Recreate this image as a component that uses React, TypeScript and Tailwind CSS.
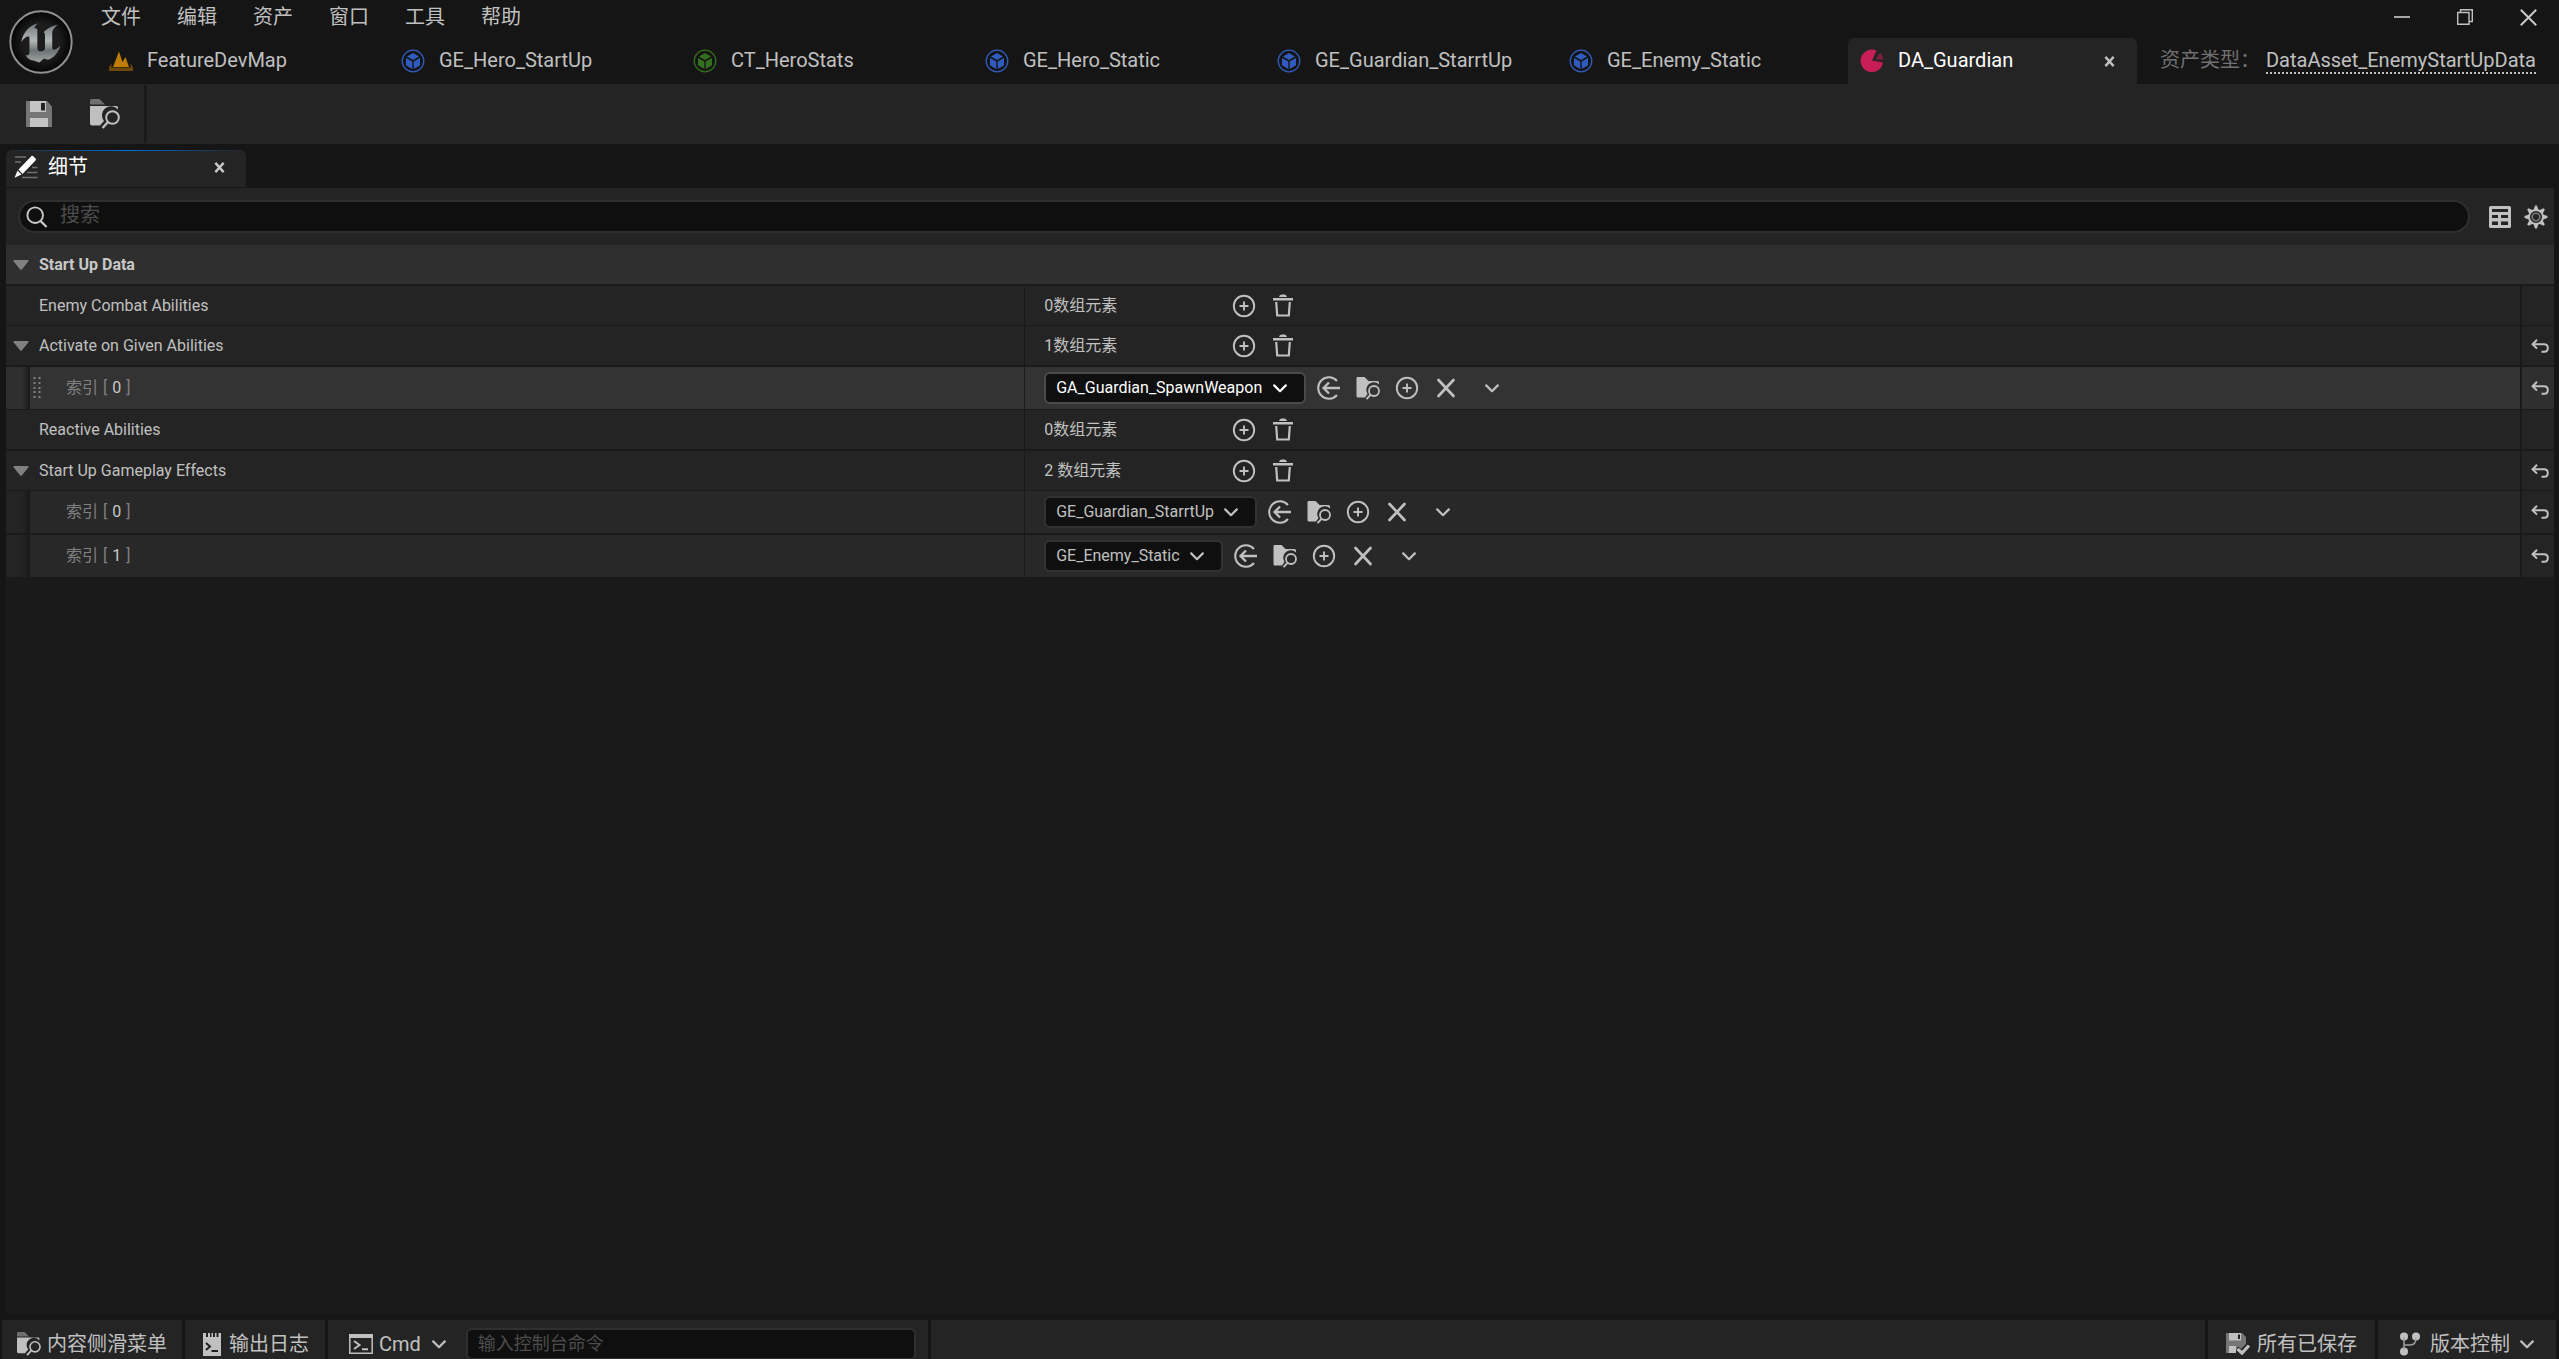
import React from "react";

const FONT = "font-['Roboto','Noto_Sans_CJK_SC',sans-serif]";

type IconProps = { className?: string };

function Logo() {
  return (
    <svg viewBox="0 0 194 194" className="size-16" aria-hidden="true">
      <defs>
        <linearGradient id="metal" x1="0" y1="0" x2="0" y2="1">
          <stop offset="0" stopColor="#70767a" />
          <stop offset="0.45" stopColor="#b4b7b8" />
          <stop offset="0.7" stopColor="#6c7373" />
          <stop offset="1" stopColor="#a3a7a8" />
        </linearGradient>
        <radialGradient id="disc">
          <stop offset="0.6" stopColor="#1c1c1c" />
          <stop offset="1" stopColor="#040404" />
        </radialGradient>
      </defs>
      <circle cx="97" cy="97" r="93" fill="url(#disc)" stroke="#8d9192" strokeWidth="6" />
      <path
        fill="url(#metal)"
        d="M90 40C68 44 43 62 37 98C45 84 56 78 61 81C62 82 62 84 62 88V126C62 136 58 140 50 136C56 149 68 154 77 154L92 159L106 147L117 151C134 146 150 130 155 108C147 118 138 122 134 120C131 119 131 116 131 112V70C131 60 140 51 148 45C130 48 113 58 105 68C107 68 109 70 109 75V118C106 124 97 127 91 124C87 122 86 120 86 114V62C86 55 80 55 76 56C79 48 84 43 90 40Z"
      />
    </svg>
  );
}

function MapIcon() {
  return (
    <svg viewBox="0 0 24 20" className="w-6 h-5" aria-hidden="true">
      <path fill="#c07c09" d="M4 16L10 0.500L13.500 11L16.500 6L20 16Z" />
      <path fill="#6e480b" d="M3 12L2 16.500H22L21 12L24 16V20H0V16Z" />
    </svg>
  );
}

function CubeIcon({ className = "" }: IconProps) {
  return (
    <svg viewBox="0 0 24 24" className={`size-6 ${className}`} fill="currentColor" aria-hidden="true">
      <circle cx="12" cy="12" r="10.800" fill="none" stroke="currentColor" strokeWidth="1.300" />
      <path d="M12 4L18 7.500L12 11L6 7.500Z" />
      <path d="M5 9L11.300 12.600V20L5 16.300Z" />
      <path d="M19 9L12.700 12.600V20L19 16.300Z" />
    </svg>
  );
}

function PieIcon() {
  return (
    <svg viewBox="0 0 24 24" className="size-6" aria-hidden="true">
      <path fill="#c81e58" d="M16.500 1.500A11.300 11.300 0 1 0 23 13.500L12 11.500Z" />
      <path fill="#7a1f40" d="M20 3.500A11 11 0 0 1 23.500 10.800L15.500 10.500Z" />
    </svg>
  );
}

function CloseIcon({ className = "" }: IconProps) {
  return (
    <svg viewBox="0 0 12 12" className={className} fill="none" stroke="currentColor" strokeWidth="2.600" aria-hidden="true">
      <path d="M1.500 1L10.500 11M10.500 1L1.500 11" />
    </svg>
  );
}

function SaveIcon() {
  return (
    <svg viewBox="0 0 26 26" className="size-[26px]" aria-hidden="true">
      <path fill="#767676" d="M0 0H21L26 5.500V26H0Z" />
      <path fill="#c4c4c4" d="M4 0H20V11H4ZM4 17H22V26H4Z" />
      <path fill="#242424" d="M15 2H19V9.500H15Z" />
    </svg>
  );
}

function BrowseTwoTone({ className = "" }: IconProps) {
  return (
    <svg viewBox="0 0 30 30" className={className} aria-hidden="true">
      <path fill="#6f6f6f" d="M0 1.500Q0 0 1.500 0H9.500L15 5.500H0Z" />
      <path fill="#c0c0c0" d="M0 7H26.500Q28 7 28 8.500V10.500A9 9 0 0 0 14 22L10 26.500H2Q0 26.500 0 24.500Z" />
      <circle cx="22.500" cy="18.500" r="6.300" fill="none" stroke="#c0c0c0" strokeWidth="2" />
      <path stroke="#c0c0c0" strokeWidth="2.400" d="M18 23L12.500 29" />
    </svg>
  );
}

function BrowseIcon() {
  return (
    <svg viewBox="0 0 24 24" className="size-6" aria-hidden="true">
      <path fill="currentColor" d="M0.500 2Q0.500 1 1.500 1H8.500L12.500 5H21.500Q23 5 23 6.500V8.500A7.500 7.500 0 0 0 11.500 18L9 21.500H2Q0.500 21.500 0.500 20Z" />
      <circle cx="18" cy="15" r="5" fill="none" stroke="currentColor" strokeWidth="1.800" />
      <path stroke="currentColor" strokeWidth="2" d="M14.500 18.800L10.500 23.200" />
    </svg>
  );
}

function DetailsIcon() {
  return (
    <svg viewBox="0 0 24 24" className="size-6" aria-hidden="true">
      <path stroke="#6f6f6f" strokeWidth="1.600" d="M1 2H12M1 7H7M18 12.500H23.500M13 17.500H23.500M8 22.500H23.500" />
      <path fill="#fff" d="M4.500 14.500L17.500 1Q18.500 0.500 19.500 1.500L21.500 3.500Q22.500 4.500 21.500 5.500L8.500 19ZM3.500 15.500L7.500 19.500L0.500 22.800Z" />
    </svg>
  );
}

function SearchIcon() {
  return (
    <svg viewBox="0 0 24 24" className="size-[22px]" fill="none" stroke="#c8c8c8" strokeWidth="2" aria-hidden="true">
      <circle cx="10" cy="10" r="8.500" />
      <path d="M16 16.500L22.500 23" strokeWidth="2.400" />
    </svg>
  );
}

function TableIcon() {
  return (
    <svg viewBox="0 0 22 22" className="size-[22px]" aria-hidden="true">
      <path
        fill="#c0c0c0"
        fillRule="evenodd"
        d="M1.500 0H20.500Q22 0 22 1.500V20.500Q22 22 20.500 22H1.500Q0 22 0 20.500V1.500Q0 0 1.500 0ZM3 3V6H19V3ZM3 9V12H9V9ZM12 9V12H19V9ZM3 15.500V19H9V15.500ZM12 15.500V19H19V15.500Z"
      />
    </svg>
  );
}

const TEETH = [0, 45, 90, 135, 180, 225, 270, 315];

function GearIcon() {
  return (
    <svg viewBox="-12 -12 24 24" className="size-6" aria-hidden="true">
      {TEETH.map((angle) => (
        <path key={angle} fill="#c0c0c0" transform={`rotate(${angle})`} d="M-2.400 -7L-1 -11.500H1L2.400 -7Z" />
      ))}
      <circle r="7" fill="none" stroke="#c0c0c0" strokeWidth="1.900" />
      <circle r="3.800" fill="none" stroke="#7c7c7c" strokeWidth="1.600" />
    </svg>
  );
}

function PlusCircle() {
  return (
    <svg viewBox="0 0 24 24" className="size-6" fill="none" stroke="currentColor" strokeWidth="1.900" aria-hidden="true">
      <circle cx="12" cy="12" r="10.200" />
      <path d="M12 7.500V16.500M7.500 12H16.500" />
    </svg>
  );
}

function TrashIcon() {
  return (
    <svg viewBox="0 0 24 24" className="size-6" fill="none" stroke="currentColor" aria-hidden="true">
      <path fill="currentColor" stroke="none" d="M8 3Q8.500 0.500 10.500 0.500H13.500Q15.500 0.500 16 3ZM2 4H22V6.600H2Z" />
      <path strokeWidth="2.200" d="M5.200 8L6.200 21.500H17.800L18.800 8" />
    </svg>
  );
}

function UseIcon() {
  return (
    <svg viewBox="0 0 24 24" className="size-6" fill="none" stroke="currentColor" strokeWidth="2" aria-hidden="true">
      <path d="M20 5A10.700 10.700 0 1 0 20 19" />
      <path d="M23 12H6M12 6.500L6.500 12L12 17.500" strokeWidth="2.300" />
    </svg>
  );
}

function BigX() {
  return (
    <svg viewBox="0 0 24 24" className="size-6" stroke="currentColor" strokeWidth="2.700" strokeLinecap="round" aria-hidden="true">
      <path d="M4.500 4L19.500 20M19.500 4L4.500 20" />
    </svg>
  );
}

function Chevron({ className = "" }: IconProps) {
  return (
    <svg viewBox="0 0 14 9" className={`w-3.5 h-[9px] ${className}`} fill="none" stroke="currentColor" strokeWidth="2.200" strokeLinecap="round" strokeLinejoin="round" aria-hidden="true">
      <path d="M1.200 1.400L7 7.200L12.800 1.400" />
    </svg>
  );
}

function RevertIcon() {
  return (
    <svg viewBox="0 0 18 14" className="w-[18px] h-3.5" fill="none" stroke="#c0c0c0" strokeWidth="2" aria-hidden="true">
      <path d="M1.500 5.200H13Q16.800 5.200 16.800 8.800Q16.800 12.800 13.500 12.800H10.500" />
      <path d="M6 0.800L1.600 5.200L6 9.600" />
    </svg>
  );
}

function Arrow() {
  return (
    <svg viewBox="0 0 16 10" className="w-4 h-2.5" aria-hidden="true">
      <path fill="#808080" d="M1 0H15Q16 0.500 15.300 1.400L8.800 9.400Q8 10 7.200 9.400L0.700 1.400Q0 0.500 1 0Z" />
    </svg>
  );
}

function Grip() {
  return (
    <svg viewBox="0 0 8 22" className="w-2 h-[22px]" fill="#828282" aria-hidden="true">
      {[0, 5, 10, 14, 19].map((y) => (
        <React.Fragment key={y}>
          <rect x="0.500" y={y} width="2" height="2" />
          <rect x="5.500" y={y} width="2" height="2" />
        </React.Fragment>
      ))}
    </svg>
  );
}

function LogIcon() {
  return (
    <svg viewBox="0 0 18 24" className="w-[18px] h-6" aria-hidden="true">
      <path fill="#c0c0c0" d="M0 1H3V5H5V1H7V5H8.500V1H10V5H12V1H13.500V5H15.500V1H18V24H0Z" />
      <path fill="none" stroke="#202020" strokeWidth="2" d="M3 11L7 14.500L3 18M8.500 19H15" />
    </svg>
  );
}

function TerminalIcon() {
  return (
    <svg viewBox="0 0 24 20" className="w-6 h-5" fill="none" stroke="#c0c0c0" aria-hidden="true">
      <path fill="#c0c0c0" stroke="none" d="M0 0H24V4H0Z" />
      <path strokeWidth="1.500" d="M0.800 1V19.200H23.200V1" />
      <path strokeWidth="2" d="M5 7L10.500 11L5 15M13 15.200H19" />
    </svg>
  );
}

function SavedIcon() {
  return (
    <svg viewBox="0 0 24 24" className="size-6" aria-hidden="true">
      <path fill="#767676" d="M0 1H16L20 5V12L15 17L12 14.500L9 21H0Z" />
      <path fill="#c0c0c0" d="M3 1H15V8.500H3ZM3 14H10V21H3Z" />
      <path fill="#242424" d="M12 2.500H14V7H12Z" />
      <path fill="none" stroke="#c0c0c0" strokeWidth="3.200" d="M11.500 17L16 21L23 13.500" />
    </svg>
  );
}

function BranchIcon() {
  return (
    <svg viewBox="0 0 20 24" className="w-5 h-6" fill="#c0c0c0" aria-hidden="true">
      <circle cx="4" cy="4.500" r="4" />
      <circle cx="16" cy="4.500" r="4" />
      <circle cx="4" cy="19.500" r="4" />
      <path fill="none" stroke="#a0a0a0" strokeWidth="1.500" d="M4 5V18M4 13H10Q16 13 16 6" />
    </svg>
  );
}

const menus = ["文件", "编辑", "资产", "窗口", "工具", "帮助"];

const assetTabs: { name: string; icon: React.ReactNode }[] = [
  { name: "FeatureDevMap", icon: <MapIcon /> },
  { name: "GE_Hero_StartUp", icon: <CubeIcon className="text-[#305cc0]" /> },
  { name: "CT_HeroStats", icon: <CubeIcon className="text-[#35701f]" /> },
  { name: "GE_Hero_Static", icon: <CubeIcon className="text-[#305cc0]" /> },
  { name: "GE_Guardian_StarrtUp", icon: <CubeIcon className="text-[#305cc0]" /> },
  { name: "GE_Enemy_Static", icon: <CubeIcon className="text-[#305cc0]" /> },
];

function TitleBar() {
  return (
    <header className="flex h-[84px] shrink-0">
      <div className="flex w-24 shrink-0 items-center pl-[9px]">
        <Logo />
      </div>
      <div className="flex min-w-0 flex-1 flex-col justify-between">
        <div className="flex h-[34px] items-center justify-between pl-[5px] pr-[22px]">
          <nav className="flex gap-9">
            {menus.map((m) => (
              <button key={m} type="button" className="leading-6">
                {m}
              </button>
            ))}
          </nav>
          <div className="flex items-center gap-[47px]">
            <button type="button" aria-label="最小化" className="h-0.5 w-4 bg-[#a8a8a8]" />
            <button type="button" aria-label="还原">
              <svg viewBox="0 0 16 16" className="size-4" fill="none" stroke="#c0c0c0" strokeWidth="1.400" aria-hidden="true">
                <path d="M0.700 3.500H12V15.300H0.700ZM3.500 3V0.700H15.300V12.500H12.500" />
              </svg>
            </button>
            <button type="button" aria-label="关闭">
              <svg viewBox="0 0 17 17" className="size-[17px]" stroke="#c8c8c8" strokeWidth="2" aria-hidden="true">
                <path d="M0.800 0.800L16.200 16.200M16.200 0.800L0.800 16.200" />
              </svg>
            </button>
          </div>
        </div>
        <div className="flex h-[46px] items-stretch justify-between">
          <div className="flex min-w-0 gap-[3px]">
            {assetTabs.map((t) => (
              <button key={t.name} type="button" className="flex w-[289px] min-w-0 items-center pl-[13px] text-left">
                {t.icon}
                <span className="truncate pb-0.5 pl-3.5 leading-6">{t.name}</span>
              </button>
            ))}
            <div className="flex w-[289px] min-w-0 items-center rounded-t-md bg-[#242424] pl-3 pr-[22px]">
              <button type="button" className="flex min-w-0 flex-1 items-center text-left text-white">
                <PieIcon />
                <span className="truncate pb-0.5 pl-3.5 leading-6">DA_Guardian</span>
              </button>
              <button type="button" aria-label="关闭标签页">
                <CloseIcon className="size-[11px]" />
              </button>
            </div>
          </div>
          <div className="flex shrink-0 items-center gap-1.5 pr-[23px]">
            <span className="pb-0.5 leading-6 text-[#707070]">资产类型：</span>
            <a href="#asset-class" className="border-b-2 border-dotted border-[#c0c0c0] leading-6">
              DataAsset_EnemyStartUpData
            </a>
          </div>
        </div>
      </div>
    </header>
  );
}

function Toolbar() {
  return (
    <div className="flex h-[60px] shrink-0 items-stretch bg-[#242424] py-px">
      <div className="flex items-center gap-[38px] border-r-[3px] border-[#1a1a1a] pl-[26px] pr-6">
        <button type="button" aria-label="保存">
          <SaveIcon />
        </button>
        <button type="button" aria-label="浏览">
          <BrowseTwoTone className="size-[30px]" />
        </button>
      </div>
    </div>
  );
}

type Row = {
  label?: string;
  index?: number;
  open?: boolean;
  count?: string;
  asset?: string;
  hovered?: boolean;
  revert?: boolean;
  line: string;
};

const rows: Row[] = [
  { label: "Enemy Combat Abilities", count: "0数组元素", line: "border-b" },
  { label: "Activate on Given Abilities", open: true, count: "1数组元素", revert: true, line: "border-b-2" },
  { index: 0, asset: "GA_Guardian_SpawnWeapon", hovered: true, revert: true, line: "border-b" },
  { label: "Reactive Abilities", count: "0数组元素", line: "border-b-2" },
  { label: "Start Up Gameplay Effects", open: true, count: "2 数组元素", revert: true, line: "border-b" },
  { index: 0, asset: "GE_Guardian_StarrtUp", revert: true, line: "border-b-2" },
  { index: 1, asset: "GE_Enemy_Static", revert: true, line: "border-b-2" },
];

function PropertyRow({ row }: { row: Row }) {
  const child = row.asset !== undefined;
  const bg = row.hovered ? "bg-[#333333]" : child ? "bg-[#282828]" : "bg-[#242424]";
  const edge = row.hovered ? "bg-[#2f2f2f]" : "bg-[#242424]";
  return (
    <div className={`flex border-[#1a1a1a] ${row.line} ${bg}`}>
      <div className="flex w-2/5 shrink-0 items-center border-r border-[#1a1a1a]">
        {child ? (
          <>
            <div className={`flex h-full w-6 justify-end ${edge}`}>
              <div className="w-2 bg-linear-to-r from-transparent to-[#181818]" />
            </div>
            <div className="w-9 pl-[3px]">{row.hovered && <Grip />}</div>
            <span className="flex gap-[5px] text-[#808080]">
              <span>索引</span>
              <span>[</span>
              <span className="text-[#c8c8c8]">{row.index}</span>
              <span>]</span>
            </span>
          </>
        ) : (
          <>
            <div className="flex w-[33px] pl-[7px]">
              {row.open && (
                <button type="button" aria-label={`折叠 ${row.label}`}>
                  <Arrow />
                </button>
              )}
            </div>
            <span>{row.label}</span>
          </>
        )}
      </div>
      {child ? (
        <div className="flex h-[42px] min-w-0 flex-1 items-center pl-[19px]">
          <div className={`relative ${row.hovered ? "text-white" : ""}`}>
            <select
              aria-label={`索引 ${row.index}`}
              className={`h-8 appearance-none rounded-md border-2 bg-[#0f0f0f] pl-2.5 pr-[41px] ${row.hovered ? "border-[#4a4a4a]" : "border-[#323232]"}`}
            >
              <option>{row.asset}</option>
            </select>
            <Chevron className="pointer-events-none absolute right-[19px] top-3" />
          </div>
          <div className="flex gap-[15px] pl-[11px]">
            <button type="button" aria-label="使用所选资产"><UseIcon /></button>
            <button type="button" aria-label="浏览至资产"><BrowseIcon /></button>
            <button type="button" aria-label="新建"><PlusCircle /></button>
            <button type="button" aria-label="清除"><BigX /></button>
          </div>
          <button type="button" aria-label="更多选项" className="pl-[27px]"><Chevron /></button>
        </div>
      ) : (
        <div className="flex h-[39px] min-w-0 flex-1 items-center pl-[19px]">
          <span className="w-[188px]">{row.count}</span>
          <div className="flex gap-[15px]">
            <button type="button" aria-label="添加元素"><PlusCircle /></button>
            <button type="button" aria-label="移除所有元素"><TrashIcon /></button>
          </div>
        </div>
      )}
      <div className={`flex w-[34px] shrink-0 items-center border-l-2 border-[#1a1a1a] pl-[9px] ${edge}`}>
        {row.revert && (
          <button type="button" aria-label="重置为默认值"><RevertIcon /></button>
        )}
      </div>
    </div>
  );
}

function DetailsPanel() {
  return (
    <main className="flex min-h-0 flex-1 flex-col pl-1.5 pr-[5px] pt-1.5">
      <div className="flex h-[37px] w-60 shrink-0 flex-col overflow-hidden rounded-t-md bg-[#242424] text-white">
        <div className="h-px bg-linear-to-r from-transparent via-[#0070e0] to-transparent" />
        <div className="flex flex-1 items-center pb-1 pl-2 pr-[21px]">
          <DetailsIcon />
          <h2 className="flex-1 pl-2.5 leading-6">细节</h2>
          <button type="button" aria-label="关闭细节" className="text-[#c8c8c8]">
            <CloseIcon className="size-[11px]" />
          </button>
        </div>
      </div>
      <section className="mt-px flex min-h-0 flex-1 flex-col bg-[#1a1a1a]">
        <div className="flex items-center bg-[#242424] py-3 pl-3 pr-1.5">
          <label className="flex h-[33px] flex-1 items-center rounded-full border-2 border-[#2f2f2f] bg-[#0f0f0f] pl-1.5">
            <SearchIcon />
            <input type="text" aria-label="搜索" placeholder="搜索" className="min-w-0 flex-1 bg-transparent pb-1 pl-3 pr-4 leading-6 outline-none placeholder:text-[#4c4c4c]" />
          </label>
          <button type="button" aria-label="表格视图" className="pl-[19px]"><TableIcon /></button>
          <button type="button" aria-label="设置" className="pl-[13px]"><GearIcon /></button>
        </div>
        <div className="text-base leading-6">
          <div className="flex h-[41px] items-center border-b-2 border-[#1a1a1a] bg-[#2f2f2f] pl-[7px]">
            <button type="button" className="flex items-center gap-2.5 font-bold text-[#c8c8c8]">
              <Arrow />
              Start Up Data
            </button>
          </div>
          {rows.map((r, i) => (
            <PropertyRow key={i} row={r} />
          ))}
        </div>
      </section>
    </main>
  );
}

function StatusBar() {
  return (
    <footer className="mt-1.5 flex h-[39px] shrink-0 gap-[3px] overflow-hidden pl-0.5 pr-[3px] leading-6">
      <button type="button" className="flex h-12 items-center gap-1.5 bg-[#242424] px-[15px]">
        <BrowseTwoTone className="size-6" />
        内容侧滑菜单
      </button>
      <button type="button" className="flex h-12 items-center gap-2 bg-[#242424] pl-[18px] pr-4">
        <LogIcon />
        <span>输出日志</span>
      </button>
      <div className="flex h-12 items-center bg-[#242424] pl-[21px] pr-3">
        <button type="button" className="flex items-center">
          <TerminalIcon />
          <span className="pl-1.5 pr-[11px]">Cmd</span>
          <Chevron />
        </button>
        <input
          type="text"
          aria-label="控制台命令"
          placeholder="输入控制台命令"
          className="ml-5 h-8 w-[450px] rounded-md border-2 border-[#2f2f2f] bg-[#0f0f0f] px-2.5 pb-0.5 text-lg leading-6 outline-none placeholder:text-[#4c4c4c]"
        />
      </div>
      <div className="h-12 min-w-0 flex-1 bg-[#242424]" />
      <button type="button" className="flex h-12 items-center gap-[7px] bg-[#242424] px-[18px]">
        <SavedIcon />
        所有已保存
      </button>
      <button type="button" className="flex h-12 items-center bg-[#242424] px-[22px]">
        <BranchIcon />
        <span className="px-2.5">版本控制</span>
        <Chevron />
      </button>
    </footer>
  );
}

export default function App() {
  return (
    <div className={`flex h-screen flex-col overflow-hidden bg-[#151515] text-xl text-[#c0c0c0] ${FONT}`}>
      <TitleBar />
      <Toolbar />
      <DetailsPanel />
      <StatusBar />
    </div>
  );
}
